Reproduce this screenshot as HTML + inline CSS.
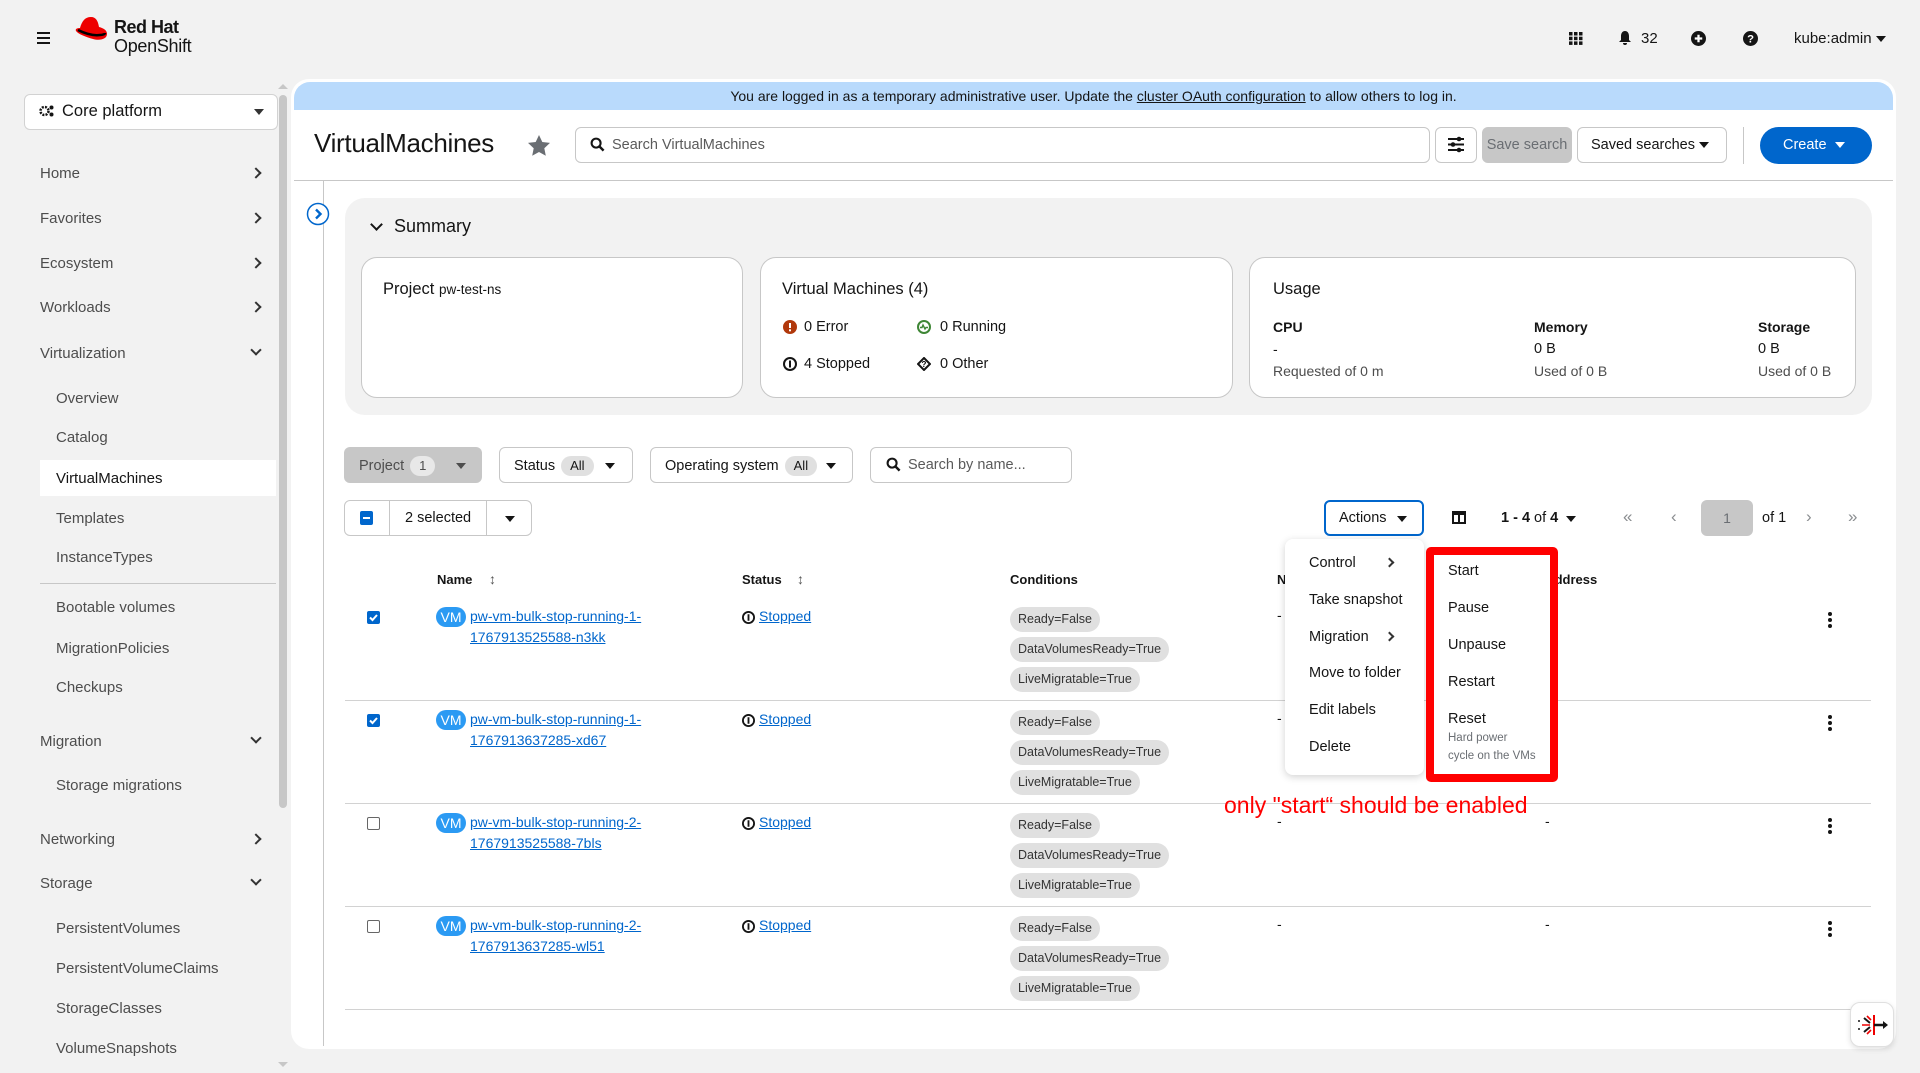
<!DOCTYPE html>
<html><head><meta charset="utf-8">
<style>
*{box-sizing:border-box;margin:0;padding:0}
body{width:1920px;height:1073px;background:#f2f2f2;font-family:"Liberation Sans",sans-serif;color:#151515;position:relative;overflow:hidden}
.a{position:absolute;white-space:nowrap}
.nav{position:absolute;left:40px;font-size:15px;color:#4d4d4d}
.sub{left:56px}
.chev{position:absolute;left:252px;width:8px;height:8px;border-right:2px solid #333;border-bottom:2px solid #333}
.cr{transform:rotate(-45deg)}
.cd{transform:rotate(45deg)}
.chip{position:absolute;left:1010px;height:25px;line-height:25px;padding:0 8px;border-radius:13px;background:#e0e0e0;font-size:12.5px;color:#333}
.lnk{color:#0066cc;text-decoration:underline;font-size:14px}
.cb{position:absolute;left:367px;width:13px;height:13px;border-radius:2px}
.cbon{background:#0066cc}
.cboff{border:1.5px solid #666;background:#fff}
.keb{position:absolute;left:1828px;width:4px}
.keb i{display:block;width:4px;height:4px;border-radius:2px;background:#151515;margin-bottom:2px}
.btn{position:absolute;border:1px solid #c7c7c7;border-radius:6px;background:#fff}
.caret{display:block;width:0;height:0;border-left:5px solid transparent;border-right:5px solid transparent;border-top:6px solid #151515}
.badge{display:inline-block;background:#e0e0e0;border-radius:10px;padding:0 9px;font-size:13px;line-height:20px;margin-left:6px}
.mi{position:absolute;font-size:14.5px;color:#151515}
.th{position:absolute;top:572px;font-size:13px;font-weight:bold}
</style></head><body>

<div class="a" style="left:37px;top:32px;width:13px">
 <div style="height:2px;background:#151515;margin-bottom:3px"></div><div style="height:2px;background:#151515;margin-bottom:3px"></div><div style="height:2px;background:#151515"></div></div>
<svg class="a" style="left:74px;top:15px" width="34" height="28" viewBox="0 0 34 28">
 <path d="M6 13 C8 6 11 2 17 2 C22 2 24 6 25 12 C29 13 33 15 33 19 C33 24 26 26 19 24 C12 22 4 19 2 16 C1 14 3 13 6 13Z" fill="#ee0000"/>
 <path d="M4 15 C10 18 18 21 26 20 C29 20 31 19 31 18" stroke="#000" stroke-width="2.5" fill="none"/></svg>
<div class="a" style="left:114px;top:17px;font-size:18px;font-weight:bold;letter-spacing:-0.5px">Red Hat</div>
<div class="a" style="left:114px;top:36px;font-size:18px;letter-spacing:-0.3px">OpenShift</div>

<svg class="a" style="left:1569px;top:32px" width="14" height="13" viewBox="0 0 14 13"><g fill="#151515"><rect x="0" y="0" width="3.5" height="3.5"/><rect x="5" y="0" width="3.5" height="3.5"/><rect x="10" y="0" width="3.5" height="3.5"/><rect x="0" y="4.7" width="3.5" height="3.5"/><rect x="5" y="4.7" width="3.5" height="3.5"/><rect x="10" y="4.7" width="3.5" height="3.5"/><rect x="0" y="9.4" width="3.5" height="3.5"/><rect x="5" y="9.4" width="3.5" height="3.5"/><rect x="10" y="9.4" width="3.5" height="3.5"/></g></svg>
<svg class="a" style="left:1618px;top:30px" width="14" height="16" viewBox="0 0 14 16"><path d="M7 1C4 1 3 4 3 6v4L1 12h12l-2-2V6c0-2-1-5-4-5z M5 13a2 2 0 0 0 4 0z" fill="#151515"/></svg>
<div class="a" style="left:1641px;top:30px;font-size:15px">32</div>
<svg class="a" style="left:1691px;top:31px" width="15" height="15" viewBox="0 0 16 16"><circle cx="8" cy="8" r="8" fill="#151515"/><path d="M8 4v8M4 8h8" stroke="#fff" stroke-width="2.4"/></svg>
<svg class="a" style="left:1743px;top:31px" width="15" height="15" viewBox="0 0 16 16"><circle cx="8" cy="8" r="8" fill="#151515"/><text x="8" y="12.5" text-anchor="middle" font-size="12" font-weight="bold" fill="#fff" font-family="Liberation Sans">?</text></svg>
<div class="a" style="left:1794px;top:30px;font-size:15px">kube:admin</div>
<div class="a" style="left:1876px;top:36px"><span class="caret"></span></div>

<div class="a" style="left:24px;top:94px;width:254px;height:36px;background:#fff;border:1px solid #d2d2d2;border-radius:6px"></div>
<svg class="a" style="left:39px;top:104px" width="16" height="14" viewBox="0 0 16 14"><circle cx="5.5" cy="7" r="4" fill="none" stroke="#151515" stroke-width="2.5" stroke-dasharray="2 1.2"/><circle cx="12.5" cy="3.5" r="2" fill="#151515"/><circle cx="12.5" cy="10.5" r="2" fill="#151515"/></svg>
<div class="a" style="left:62px;top:102px;font-size:16.5px">Core platform</div>
<div class="a" style="left:254px;top:109px"><span class="caret" style="border-top-color:#333"></span></div>
<div class="a" style="left:279px;top:95px;width:8px;height:713px;background:#c7c7c7;border-radius:4px"></div>
<div class="a" style="left:278px;top:84px;width:0;height:0;border-left:5px solid transparent;border-right:5px solid transparent;border-bottom:5px solid #c7c7c7"></div>
<div class="a" style="left:278px;top:1062px;width:0;height:0;border-left:5px solid transparent;border-right:5px solid transparent;border-top:5px solid #c7c7c7"></div>

<div class="nav" style="top:165px">Home</div><div class="chev cr" style="top:169px"></div>
<div class="nav" style="top:210px">Favorites</div><div class="chev cr" style="top:214px"></div>
<div class="nav" style="top:255px">Ecosystem</div><div class="chev cr" style="top:259px"></div>
<div class="nav" style="top:299px">Workloads</div><div class="chev cr" style="top:303px"></div>
<div class="nav" style="top:345px">Virtualization</div><div class="chev cd" style="top:346px"></div>
<div class="nav sub" style="top:390px">Overview</div>
<div class="nav sub" style="top:429px">Catalog</div>
<div class="a" style="left:40px;top:460px;width:236px;height:36px;background:#fff"></div>
<div class="nav sub" style="top:470px;color:#151515">VirtualMachines</div>
<div class="nav sub" style="top:510px">Templates</div>
<div class="nav sub" style="top:549px">InstanceTypes</div>
<div class="a" style="left:40px;top:583px;width:236px;height:1px;background:#c7c7c7"></div>
<div class="nav sub" style="top:599px">Bootable volumes</div>
<div class="nav sub" style="top:640px">MigrationPolicies</div>
<div class="nav sub" style="top:679px">Checkups</div>
<div class="nav" style="top:733px">Migration</div><div class="chev cd" style="top:734px"></div>
<div class="nav sub" style="top:777px">Storage migrations</div>
<div class="nav" style="top:831px">Networking</div><div class="chev cr" style="top:835px"></div>
<div class="nav" style="top:875px">Storage</div><div class="chev cd" style="top:876px"></div>
<div class="nav sub" style="top:920px">PersistentVolumes</div>
<div class="nav sub" style="top:960px">PersistentVolumeClaims</div>
<div class="nav sub" style="top:1000px">StorageClasses</div>
<div class="nav sub" style="top:1040px">VolumeSnapshots</div>

<div class="a" style="left:291px;top:79px;width:1605px;height:970px;background:#fff;border-radius:18px"></div>
<div class="a" style="left:294px;top:82px;width:1599px;height:28px;background:#b9dafc;border-radius:16px 16px 0 0"></div>
<div class="a" style="left:294px;top:88px;width:1599px;text-align:center;font-size:14px">You are logged in as a temporary administrative user. Update the <span style="text-decoration:underline">cluster OAuth configuration</span> to allow others to log in.</div>

<div class="a" style="left:314px;top:128px;font-size:26px;letter-spacing:-0.3px">VirtualMachines</div>
<svg class="a" style="left:527px;top:134px" width="24" height="23" viewBox="0 0 24 23"><path d="M12 1l3.3 7 7.7.9-5.7 5.3 1.5 7.6L12 18l-6.8 3.8 1.5-7.6L1 8.9 8.7 8z" fill="#6a6e73"/></svg>
<div class="btn" style="left:575px;top:127px;width:855px;height:36px"></div>
<svg class="a" style="left:590px;top:137px" width="15" height="15" viewBox="0 0 16 16"><circle cx="6.5" cy="6.5" r="4.8" fill="none" stroke="#151515" stroke-width="2.2"/><path d="M10 10l4.5 4.5" stroke="#151515" stroke-width="2.6"/></svg>
<div class="a" style="left:612px;top:137px;font-size:14.5px;color:#5a5a5a">Search VirtualMachines</div>
<div class="btn" style="left:1435px;top:127px;width:42px;height:36px"></div>
<svg class="a" style="left:1447px;top:136px" width="18" height="17" viewBox="0 0 18 17"><g stroke="#151515" stroke-width="2"><path d="M1 3h16M1 8.5h16M1 14h16"/></g><circle cx="12" cy="3" r="2.3" fill="#151515"/><circle cx="6" cy="8.5" r="2.3" fill="#151515"/><circle cx="12" cy="14" r="2.3" fill="#151515"/></svg>
<div class="a" style="left:1482px;top:127px;width:90px;height:36px;background:#c7c7c7;border-radius:6px;text-align:center;line-height:36px;font-size:14.5px;color:#6a6e73">Save search</div>
<div class="btn" style="left:1577px;top:127px;width:150px;height:36px"></div>
<div class="a" style="left:1591px;top:137px;font-size:14.5px">Saved searches</div>
<div class="a" style="left:1699px;top:142px"><span class="caret"></span></div>
<div class="a" style="left:1743px;top:127px;width:1px;height:37px;background:#c7c7c7"></div>
<div class="a" style="left:1760px;top:127px;width:112px;height:37px;background:#0066cc;border-radius:19px"></div>
<div class="a" style="left:1783px;top:137px;font-size:14.5px;color:#fff">Create</div>
<div class="a" style="left:1835px;top:142px"><span class="caret" style="border-top-color:#fff"></span></div>
<div class="a" style="left:294px;top:180px;width:1599px;height:1px;background:#c7c7c7"></div>

<div class="a" style="left:323px;top:181px;width:1px;height:865px;background:#c7c7c7"></div>
<svg class="a" style="left:306px;top:202px" width="24" height="24" viewBox="0 0 24 24"><circle cx="12" cy="12" r="10.5" fill="#fff" stroke="#0066cc" stroke-width="1.5"/><path d="M10 7.5l4.5 4.5-4.5 4.5" stroke="#0066cc" stroke-width="2.4" fill="none"/></svg>

<div class="a" style="left:345px;top:198px;width:1527px;height:217px;background:#f2f2f2;border-radius:20px"></div>
<div class="a" style="left:372px;top:220px;width:9px;height:9px;border-right:2.5px solid #151515;border-bottom:2.5px solid #151515;transform:rotate(45deg)"></div>
<div class="a" style="left:394px;top:216px;font-size:18px">Summary</div>
<div class="a" style="left:361px;top:257px;width:382px;height:141px;background:#fff;border:1px solid #c7c7c7;border-radius:16px"></div>
<div class="a" style="left:383px;top:280px;font-size:16.5px">Project <span style="font-size:13.5px">pw-test-ns</span></div>
<div class="a" style="left:760px;top:257px;width:473px;height:141px;background:#fff;border:1px solid #c7c7c7;border-radius:16px"></div>
<div class="a" style="left:782px;top:280px;font-size:16.5px">Virtual Machines (4)</div>
<svg class="a" style="left:783px;top:320px" width="14" height="14" viewBox="0 0 14 14"><circle cx="7" cy="7" r="7" fill="#b1380b"/><rect x="6" y="3" width="2" height="5" fill="#fff"/><rect x="6" y="9.3" width="2" height="2" fill="#fff"/></svg>
<div class="a" style="left:804px;top:319px;font-size:14.5px">0 Error</div>
<svg class="a" style="left:917px;top:320px" width="14" height="14" viewBox="0 0 14 14"><circle cx="7" cy="7" r="6" fill="none" stroke="#3e8635" stroke-width="2"/><path d="M3 7.5h2l1-2.5 2 4 1-1.5h2" stroke="#3e8635" stroke-width="1.4" fill="none"/></svg>
<div class="a" style="left:940px;top:319px;font-size:14.5px">0 Running</div>
<svg class="a" style="left:783px;top:357px" width="14" height="14" viewBox="0 0 14 14"><circle cx="7" cy="7" r="6" fill="none" stroke="#151515" stroke-width="2"/><rect x="6" y="3.5" width="2" height="7" fill="#151515"/></svg>
<div class="a" style="left:804px;top:356px;font-size:14.5px">4 Stopped</div>
<svg class="a" style="left:917px;top:357px" width="14" height="14" viewBox="0 0 14 14"><path d="M7 1l6 6-6 6-6-6z" fill="none" stroke="#151515" stroke-width="2"/><text x="7" y="10" text-anchor="middle" font-size="8" font-weight="bold" font-family="Liberation Sans">?</text></svg>
<div class="a" style="left:940px;top:356px;font-size:14.5px">0 Other</div>
<div class="a" style="left:1249px;top:257px;width:607px;height:141px;background:#fff;border:1px solid #c7c7c7;border-radius:16px"></div>
<div class="a" style="left:1273px;top:280px;font-size:16.5px">Usage</div>
<div class="a" style="left:1273px;top:319px;font-size:14px;font-weight:bold">CPU</div>
<div class="a" style="left:1273px;top:341px;font-size:14px">-</div>
<div class="a" style="left:1273px;top:363px;font-size:14px;color:#4d4d4d">Requested of 0 m</div>
<div class="a" style="left:1534px;top:319px;font-size:14px;font-weight:bold">Memory</div>
<div class="a" style="left:1534px;top:341px;font-size:14.5px">0 B</div>
<div class="a" style="left:1534px;top:363px;font-size:14px;color:#4d4d4d">Used of 0 B</div>
<div class="a" style="left:1758px;top:319px;font-size:14px;font-weight:bold">Storage</div>
<div class="a" style="left:1758px;top:341px;font-size:14.5px">0 B</div>
<div class="a" style="left:1758px;top:363px;font-size:14px;color:#4d4d4d">Used of 0 B</div>

<div class="a" style="left:344px;top:447px;width:138px;height:36px;background:#c7c7c7;border-radius:6px"></div>
<div class="a" style="left:359px;top:456px;font-size:14.5px;color:#4d4d4d">Project<span class="badge" style="background:#e8e8e8">1</span></div>
<div class="a" style="left:456px;top:463px"><span class="caret" style="border-top-color:#4d4d4d"></span></div>
<div class="btn" style="left:499px;top:447px;width:134px;height:36px"></div>
<div class="a" style="left:514px;top:456px;font-size:14.5px">Status<span class="badge">All</span></div>
<div class="a" style="left:605px;top:463px"><span class="caret"></span></div>
<div class="btn" style="left:650px;top:447px;width:203px;height:36px"></div>
<div class="a" style="left:665px;top:456px;font-size:14.5px">Operating system<span class="badge">All</span></div>
<div class="a" style="left:826px;top:463px"><span class="caret"></span></div>
<div class="btn" style="left:870px;top:447px;width:202px;height:36px"></div>
<svg class="a" style="left:886px;top:457px" width="15" height="15" viewBox="0 0 16 16"><circle cx="6.5" cy="6.5" r="4.8" fill="none" stroke="#151515" stroke-width="2.2"/><path d="M10 10l4.5 4.5" stroke="#151515" stroke-width="2.6"/></svg>
<div class="a" style="left:908px;top:457px;font-size:14.5px;color:#5a5a5a">Search by name...</div>

<div class="btn" style="left:344px;top:500px;width:188px;height:36px"></div>
<div class="a" style="left:389px;top:500px;width:1px;height:36px;background:#c7c7c7"></div>
<div class="a" style="left:486px;top:500px;width:1px;height:36px;background:#c7c7c7"></div>
<div class="a" style="left:360px;top:511px;width:13px;height:14px;background:#0066cc;border-radius:2px"></div>
<div class="a" style="left:363px;top:517px;width:7px;height:2px;background:#fff"></div>
<div class="a" style="left:405px;top:510px;font-size:14.5px">2 selected</div>
<div class="a" style="left:505px;top:516px"><span class="caret"></span></div>

<div class="a" style="left:1324px;top:500px;width:100px;height:36px;border:2px solid #0066cc;border-radius:6px;background:#fff"></div>
<div class="a" style="left:1339px;top:510px;font-size:14.5px">Actions</div>
<div class="a" style="left:1397px;top:516px"><span class="caret"></span></div>
<svg class="a" style="left:1452px;top:511px" width="14" height="13" viewBox="0 0 14 13"><rect x="1" y="1" width="12" height="11" fill="none" stroke="#151515" stroke-width="2"/><rect x="1" y="1" width="12" height="3" fill="#151515"/><path d="M7 1v11" stroke="#151515" stroke-width="2"/></svg>
<div class="a" style="left:1501px;top:510px;font-size:14.5px"><b>1 - 4</b> of <b>4</b></div>
<div class="a" style="left:1566px;top:516px"><span class="caret"></span></div>
<div class="a" style="left:1623px;top:507px;font-size:17px;color:#8a8d90">«</div>
<div class="a" style="left:1671px;top:507px;font-size:17px;color:#8a8d90">‹</div>
<div class="a" style="left:1701px;top:500px;width:52px;height:36px;background:#c7c7c7;border-radius:6px;text-align:center;line-height:36px;font-size:14px;color:#6a6e73">1</div>
<div class="a" style="left:1762px;top:510px;font-size:14.5px">of 1</div>
<div class="a" style="left:1806px;top:507px;font-size:17px;color:#8a8d90">›</div>
<div class="a" style="left:1848px;top:507px;font-size:17px;color:#8a8d90">»</div>

<div class="th" style="left:437px">Name</div>
<div class="a" style="left:489px;top:571px;font-size:14px;color:#555">↕</div>
<div class="th" style="left:742px">Status</div>
<div class="a" style="left:797px;top:571px;font-size:14px;color:#555">↕</div>
<div class="th" style="left:1010px">Conditions</div>
<div class="th" style="left:1277px">N</div>
<div class="th" style="left:1530px">IP Address</div>

<div class="a" style="left:345px;top:700px;width:1526px;height:1px;background:#d2d2d2"></div>
<div class="a" style="left:345px;top:803px;width:1526px;height:1px;background:#d2d2d2"></div>
<div class="a" style="left:345px;top:906px;width:1526px;height:1px;background:#d2d2d2"></div>
<div class="a" style="left:345px;top:1009px;width:1526px;height:1px;background:#d2d2d2"></div>

<div class="cb cbon" style="top:611px"><svg width="13" height="13" viewBox="0 0 13 13"><path d="M3 6.5l2.5 2.5 4.5-5" stroke="#fff" stroke-width="2" fill="none"/></svg></div>
<div class="cb cbon" style="top:714px"><svg width="13" height="13" viewBox="0 0 13 13"><path d="M3 6.5l2.5 2.5 4.5-5" stroke="#fff" stroke-width="2" fill="none"/></svg></div>
<div class="cb cboff" style="top:817px"></div>
<div class="cb cboff" style="top:920px"></div>

<div class="a" style="left:436px;top:607px;width:30px;height:20px;border-radius:10px;background:#2b9af3;color:#fff;font-size:14px;line-height:20px;text-align:center">VM</div>
<div class="a lnk" style="left:470px;top:608px">pw-vm-bulk-stop-running-1-</div>
<div class="a lnk" style="left:470px;top:629px">1767913525588-n3kk</div>
<div class="a" style="left:436px;top:710px;width:30px;height:20px;border-radius:10px;background:#2b9af3;color:#fff;font-size:14px;line-height:20px;text-align:center">VM</div>
<div class="a lnk" style="left:470px;top:711px">pw-vm-bulk-stop-running-1-</div>
<div class="a lnk" style="left:470px;top:732px">1767913637285-xd67</div>
<div class="a" style="left:436px;top:813px;width:30px;height:20px;border-radius:10px;background:#2b9af3;color:#fff;font-size:14px;line-height:20px;text-align:center">VM</div>
<div class="a lnk" style="left:470px;top:814px">pw-vm-bulk-stop-running-2-</div>
<div class="a lnk" style="left:470px;top:835px">1767913525588-7bls</div>
<div class="a" style="left:436px;top:916px;width:30px;height:20px;border-radius:10px;background:#2b9af3;color:#fff;font-size:14px;line-height:20px;text-align:center">VM</div>
<div class="a lnk" style="left:470px;top:917px">pw-vm-bulk-stop-running-2-</div>
<div class="a lnk" style="left:470px;top:938px">1767913637285-wl51</div>

<svg class="a" style="left:742px;top:611px" width="13" height="13" viewBox="0 0 14 14"><circle cx="7" cy="7" r="6" fill="none" stroke="#151515" stroke-width="2"/><rect x="6" y="3.5" width="2" height="7" fill="#151515"/></svg>
<div class="a lnk" style="left:759px;top:608px">Stopped</div>
<svg class="a" style="left:742px;top:714px" width="13" height="13" viewBox="0 0 14 14"><circle cx="7" cy="7" r="6" fill="none" stroke="#151515" stroke-width="2"/><rect x="6" y="3.5" width="2" height="7" fill="#151515"/></svg>
<div class="a lnk" style="left:759px;top:711px">Stopped</div>
<svg class="a" style="left:742px;top:817px" width="13" height="13" viewBox="0 0 14 14"><circle cx="7" cy="7" r="6" fill="none" stroke="#151515" stroke-width="2"/><rect x="6" y="3.5" width="2" height="7" fill="#151515"/></svg>
<div class="a lnk" style="left:759px;top:814px">Stopped</div>
<svg class="a" style="left:742px;top:920px" width="13" height="13" viewBox="0 0 14 14"><circle cx="7" cy="7" r="6" fill="none" stroke="#151515" stroke-width="2"/><rect x="6" y="3.5" width="2" height="7" fill="#151515"/></svg>
<div class="a lnk" style="left:759px;top:917px">Stopped</div>

<div class="chip" style="top:607px">Ready=False</div>
<div class="chip" style="top:637px">DataVolumesReady=True</div>
<div class="chip" style="top:667px">LiveMigratable=True</div>
<div class="chip" style="top:710px">Ready=False</div>
<div class="chip" style="top:740px">DataVolumesReady=True</div>
<div class="chip" style="top:770px">LiveMigratable=True</div>
<div class="chip" style="top:813px">Ready=False</div>
<div class="chip" style="top:843px">DataVolumesReady=True</div>
<div class="chip" style="top:873px">LiveMigratable=True</div>
<div class="chip" style="top:916px">Ready=False</div>
<div class="chip" style="top:946px">DataVolumesReady=True</div>
<div class="chip" style="top:976px">LiveMigratable=True</div>

<div class="a" style="left:1277px;top:607px;font-size:14px">-</div>
<div class="a" style="left:1277px;top:710px;font-size:14px">-</div>
<div class="a" style="left:1277px;top:813px;font-size:14px">-</div>
<div class="a" style="left:1545px;top:813px;font-size:14px">-</div>
<div class="a" style="left:1277px;top:916px;font-size:14px">-</div>
<div class="a" style="left:1545px;top:916px;font-size:14px">-</div>

<div class="keb" style="top:612px"><i></i><i></i><i></i></div>
<div class="keb" style="top:715px"><i></i><i></i><i></i></div>
<div class="keb" style="top:818px"><i></i><i></i><i></i></div>
<div class="keb" style="top:921px"><i></i><i></i><i></i></div>

<div class="a" style="left:1285px;top:539px;width:139px;height:236px;background:#fff;border-radius:8px;box-shadow:0 2px 8px rgba(0,0,0,0.18)"></div>
<div class="mi" style="left:1309px;top:555px">Control</div><div class="chev cr" style="left:1386px;top:559px;width:7px;height:7px"></div>
<div class="mi" style="left:1309px;top:592px">Take snapshot</div>
<div class="mi" style="left:1309px;top:629px">Migration</div><div class="chev cr" style="left:1386px;top:633px;width:7px;height:7px"></div>
<div class="mi" style="left:1309px;top:665px">Move to folder</div>
<div class="mi" style="left:1309px;top:702px">Edit labels</div>
<div class="mi" style="left:1309px;top:739px">Delete</div>

<div class="a" style="left:1426px;top:547px;width:132px;height:235px;background:#fff;border:8px solid #ff0000;border-radius:5px"></div>
<div class="mi" style="left:1448px;top:563px">Start</div>
<div class="mi" style="left:1448px;top:600px">Pause</div>
<div class="mi" style="left:1448px;top:637px">Unpause</div>
<div class="mi" style="left:1448px;top:674px">Restart</div>
<div class="mi" style="left:1448px;top:711px">Reset</div>
<div class="a" style="left:1448px;top:732px;font-size:11.5px;color:#6a6e73">Hard power</div>
<div class="a" style="left:1448px;top:750px;font-size:11.5px;color:#6a6e73">cycle on the VMs</div>

<div class="a" style="left:1224px;top:792px;font-size:23px;color:#ff0000">only "start“ should be enabled</div>

<div class="a" style="left:1850px;top:1002px;width:44px;height:45px;background:#fff;border:1px solid #e0e0e0;border-radius:10px;box-shadow:0 2px 6px rgba(0,0,0,0.12)"></div>
<svg class="a" style="left:1856px;top:1010px" width="34" height="30" viewBox="0 0 34 30">
 <path d="M18 5v20" stroke="#ee0000" stroke-width="2"/>
 <path d="M18 15h11" stroke="#151515" stroke-width="2.5"/><path d="M27 11l5 4-5 4z" fill="#151515"/>
 <path d="M8 8l6 5M8 22l6-5" stroke="#151515" stroke-width="2"/>
 <path d="M11 6l4 4M11 24l4-4M6 15h8" stroke="#ee0000" stroke-width="1.6"/>
 <circle cx="3" cy="11" r="1" fill="#151515"/><circle cx="3" cy="19" r="1" fill="#151515"/>
</svg>
</body></html>
